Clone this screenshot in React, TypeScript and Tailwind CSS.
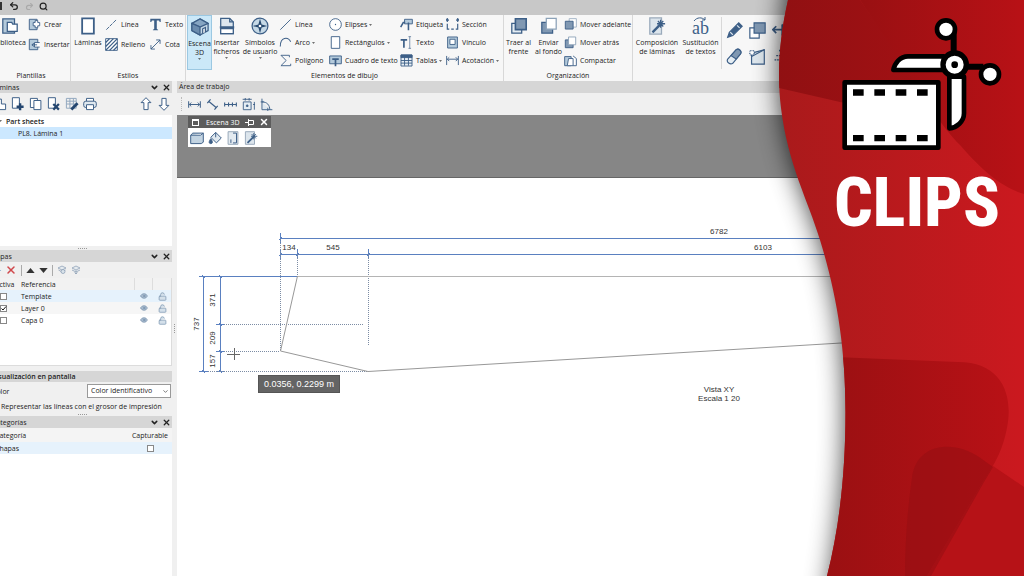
import React from "react";
import { ChevronDown, Eye, LockOpen, Redo2, Search, Undo2, X } from "lucide-react";

const INK = "#3d5f87";
const PALE = "#b4cadb";

const glyphs: Record<string, React.ReactNode> = {
  library: (
    <>
      <path d="M2 2h13v16H2z" fill={PALE} />
      <path d="M7 6h5l1 2h5v8H7z" fill="#fff" />
    </>
  ),
  create: (
    <>
      <path d="M2 2h12v16H2z" fill={PALE} />
      <path d="M11 4h4v3h3v5h-3v3h-4v-3H8V7h3z" fill="#fff" />
    </>
  ),
  insert: (
    <>
      <path d="M2 2h13v16H2z" fill={PALE} />
      <path d="M18 7h-8v7h8" fill="#fff" />
      <path d="M6 10.500h8M9 8l-3 2.500L9 13" />
    </>
  ),
  sheet: <path d="M3.500 1.500h13v17h-13z" fill="#fff" strokeWidth="2" />,
  line: <path d="M2 18L18 2" />,
  dashline: <path d="M2 18L18 2" strokeDasharray="6 1.500" />,
  hatch: (
    <>
      <path d="M1 1h18v18H1z" fill="#fff" />
      <path d="M1 7l6-6M1 13L13 1M1 19L19 1M7 19L19 7M13 19l6-6" strokeWidth="2" />
    </>
  ),
  letter: <path d="M2 1h16v5h-1.500L15.500 4H12v13l2 1v1H6v-1l2-1V4H4.500L3.500 6H2z" fill={INK} stroke="none" />,
  dim: <path d="M3 17L17 3M3 11v6h6M11 3h6v6" />,
  cube: (
    <>
      <path d="M10 1l9 5v8l-9 5-9-5V6z" fill="#c5d8e6" />
      <path d="M1 6l9 4 9-4-9-5z" fill="#86a5c2" />
      <path d="M1 6l9 4v9l-9-5z" fill="#6b8cae" />
      <path d="M13 17v-5l3-1.500v5" fill="#fff" />
    </>
  ),
  file: (
    <>
      <path d="M3 1.500h10l4 4v13H3z" fill="#dce6ee" />
      <path d="M13 1.500v4h4" />
      <path d="M2 11.500h16" strokeWidth="2.500" />
      <path d="M3 13h14v5.500H3z" fill="#fff" />
    </>
  ),
  compass: (
    <>
      <circle cx="10" cy="10" r="8.800" fill="#c6d9e6" />
      <path d="M10 2l1.800 6.200L18 10l-6.200 1.800L10 18l-1.800-6.200L2 10l6.200-1.800z" fill="#27496f" stroke="none" />
      <circle cx="10" cy="10" r="1.500" fill="#fff" stroke="none" />
    </>
  ),
  arc: <path d="M2 16C2 1 14 1 18 9" strokeWidth="1.600" />,
  polygon: <path d="M16 5V2H3l8 8-8 8h15v-3" />,
  ellipse: (
    <>
      <circle cx="10" cy="10" r="9" fill="#fff" />
      <circle cx="10" cy="10" r="1" fill={INK} stroke="none" />
    </>
  ),
  rect: <path d="M3.500 1h13v18h-13z" fill="#fff" />,
  textbox: (
    <>
      <path d="M1 3h18v12H1z" fill={PALE} />
      <path d="M5 8h10M10 8v11" strokeWidth="2.600" />
    </>
  ),
  tag: (
    <>
      <path d="M7 2h12v7H7z" fill={PALE} />
      <path d="M1 14l4-7h3M13 7v12" strokeWidth="2.400" />
    </>
  ),
  text: (
    <>
      <path d="M1 6h10M6 6v12" strokeWidth="2.600" />
      <path d="M15 1v18M13 1h4M13 19h4" strokeWidth="1" />
    </>
  ),
  table: (
    <>
      <path d="M1.500 1.500h17v17h-17z" fill="#e8eff5" />
      <path d="M1.500 1.500h17v4h-17z" fill={INK} />
      <path d="M1.500 10h17M1.500 14h17M7 2v16M13 2v16" />
    </>
  ),
  section: <path d="M2 3v3M2 9v8h3M18 3v3M18 9v8h-3M8 17h4M0 4l2-3 2 3M16 4l2-3 2 3" strokeWidth="1.800" />,
  link: (
    <>
      <path d="M2.500 1.500h15v17h-15z" fill={PALE} />
      <path d="M6 5h8v8H6z" fill="#fff" />
    </>
  ),
  measure: <path d="M1 3v14M19 3v14M2 8h16M5 5L2 8l3 3M15 5l3 3-3 3" />,
  hmeasure: <path d="M1 5v10M19 5v10M2 10h16M5 7l-3 3 3 3M15 7l3 3-3 3" strokeWidth="1.500" />,
  front: (
    <>
      <path d="M2 7h11v11H2z" fill="#e5edf3" />
      <path d="M6 2h12v12H6z" fill="#8098b2" strokeWidth="1.800" />
    </>
  ),
  back: (
    <>
      <path d="M2 6h12v12H2z" fill="#8098b2" />
      <path d="M7 1.500h11v12H7z" fill="#fff" stroke="#8ca2b8" />
    </>
  ),
  forward: (
    <>
      <path d="M8 1h11v13H8z" fill="#fff" stroke="#9fb1c3" />
      <path d="M2 5h12v12H2z" fill="#8098b2" />
    </>
  ),
  compact: (
    <>
      <path d="M1 4h10v14H1z" fill={PALE} />
      <path d="M7 7h7v11H5zM14 18h5V7l-5-4" fill="#fff" />
    </>
  ),
  wand: (
    <>
      <path d="M2 1h13v18H2z" fill="#dce5ec" stroke="#9aaabb" />
      <path d="M5 17l9-9" strokeWidth="2.600" />
      <path d="M14 3v9M10 7.500h9M11 4.500l6 6M17 4.500l-6 6" />
    </>
  ),
  pencil: (
    <>
      <path d="M2 18l2-6L15 1l4 4L8 16z" fill={INK} />
      <path d="M5 12l3 3M13 4l3 3" stroke="#dbe6ef" />
    </>
  ),
  eraser: (
    <>
      <path d="M2 13L12 2c3-2 7 2 5 5L8 18c-3 2-8-1-6-5z" fill="#e5edf3" />
      <path d="M6 9l6-7c3-2 7 2 5 5l-5 6z" fill="#8098b2" />
    </>
  ),
  copies: (
    <>
      <path d="M1 7h11v12H1z" fill="#fff" />
      <path d="M6 1h13v12H6z" fill="#8098b2" />
    </>
  ),
  region: (
    <>
      <path d="M3 6l15-4v17H3z" fill="#dfe8ef" />
      <path d="M3 10L18 2" />
      <path d="M1 3h5v5H1z" fill="#fff" strokeDasharray="1 1" />
    </>
  ),
  arrows: <path d="M1 9h13M5 5L1 9l4 4M12 3v13M12 3l4 3M12 16l5-3" strokeWidth="2" />,
  dotted: <path d="M3 14h15M9 2v3M5 9h9M9 17v3" strokeDasharray="2 1" />,
  pages: (
    <>
      <path d="M2 2h10v13H2z" fill="#fff" />
      <path d="M7 5h10v13H7z" fill="#fff" />
    </>
  ),
  hand: <path d="M2 18V9h6V3h4v7h6v8z" fill="#fff" />,
  addpage: (
    <>
      <path d="M2 1h10v15H2z" fill="#fff" />
      <path d="M13 9v10M8 14h10" strokeWidth="3.400" stroke="#24466f" />
    </>
  ),
  delpage: (
    <>
      <path d="M2 1h10v15H2z" fill="#fff" />
      <path d="M9 10l8 8M17 10l-8 8" strokeWidth="3.200" stroke="#24466f" />
    </>
  ),
  editgrid: (
    <>
      <path d="M2 2h14v14H2zM2 6h14M2 10h14M7 2v14M12 2v14" stroke="#91a8be" />
      <path d="M9 18l9-9" strokeWidth="4" stroke="#24466f" />
    </>
  ),
  print: (
    <>
      <path d="M5 6V2h10v4" fill="#fff" />
      <rect x="1" y="6" width="18" height="9" rx="3" fill="#dfe8ef" />
      <path d="M5 11h10v7H5z" fill="#fff" />
    </>
  ),
  up: <path d="M10 1l7 7h-4v10H7V8H3z" fill="#fff" />,
  down: <path d="M10 19l7-7h-4V2H7v10H3z" fill="#fff" />,
  diag: <path d="M4 5l12 10M2 8l5-6M13 18l5-6" strokeWidth="1.800" />,
  chain: <path d="M1 7v6M7 7v6M13 7v6M19 7v6M1 10h18" strokeWidth="1.700" />,
  frame: (
    <>
      <path d="M2 6h12v12H2z" fill="#e5edf3" />
      <path d="M1 2h14M5 0v4M11 0v4M19 6v12M17 10h3" />
      <path d="M8 10v4M6 12h4" strokeWidth="2" />
    </>
  ),
  angle: (
    <>
      <path d="M3 1v17h16M3 6c8 0 12 5 12 12" fill="#dfe8ef" />
      <path d="M1 6h5M12 15v5" />
    </>
  ),
  folder: <path d="M1 6l3-3h15v13l-3 2H1zM1 6h14l4-3" fill="#c3d4e2" />,
  bucket: (
    <>
      <path d="M11 2l8 8-7 7-8-8z" fill="#dfe8ef" />
      <path d="M11 2v7" />
      <path d="M4 11c-3 4-3 7 0 7s3-3 0-7z" fill={INK} />
    </>
  ),
  door: (
    <>
      <path d="M3 1h14v18H3z" fill="#e3eaf0" stroke="#98a8b8" />
      <path d="M10 3h5v14h-5M7 12v5" />
    </>
  ),
  layers: (
    <>
      <path d="M2 6l8-4 8 4-8 4z" fill="#dfe8ef" />
      <path d="M3 10l7 4 7-4" />
      <circle cx="12" cy="13" r="4" fill="#cbdbe8" />
    </>
  ),
  layersdown: (
    <>
      <path d="M2 6l8-4 8 4-8 4zM2 10l8 4 8-4" fill="#dfe8ef" />
      <path d="M10 11v7M7 15l3 3 3-3" />
    </>
  ),
};

function Glyph({ name, className = "size-[13px]" }: { name: string; className?: string }) {
  return (
    <svg viewBox="0 0 20 20" className={`shrink-0 ${className}`} fill="none" stroke={INK} strokeWidth="1.400" aria-hidden="true">
      {glyphs[name]}
    </svg>
  );
}

function Caret() {
  return (
    <svg viewBox="0 0 4 2" className="h-[2px] w-[3px] shrink-0" aria-hidden="true">
      <path d="M0 0h4L2 2z" fill="#444" />
    </svg>
  );
}

function Tool({ icon, label, menu }: { icon: string; label: string; menu?: boolean }) {
  return (
    <button type="button" className="flex items-center gap-[2px] whitespace-nowrap">
      <Glyph name={icon} className="mr-px size-[13px]" />
      {label}
      {menu && <Caret />}
    </button>
  );
}

function BigTool({ icon, lines, menu, className = "" }: { icon: string; lines: string[]; menu?: boolean; className?: string }) {
  return (
    <button type="button" className={`flex h-[55px] shrink-0 flex-col items-center pt-[2px] leading-[9px] ${className}`}>
      <Glyph name={icon} className="mb-[3px] size-[18px]" />
      {lines.map((line) => (
        <span key={line} className="whitespace-nowrap">{line}</span>
      ))}
      {menu && <span className="mt-px"><Caret /></span>}
    </button>
  );
}

function Stack({ children, className = "" }: { children: React.ReactNode; className?: string }) {
  return <div className={`flex shrink-0 flex-col items-start ${className}`}>{children}</div>;
}

function Group({ label, children, className = "" }: { label: string; children: React.ReactNode; className?: string }) {
  return (
    <section className={`flex shrink-0 flex-col justify-between border-r border-[#d8d8d8] ${className}`}>
      <div className="flex">{children}</div>
      <div className="text-center leading-[10px]">{label}</div>
    </section>
  );
}

const two = "gap-[7px] pt-[3px]";
const three = "gap-[5px] pt-[3px]";

function Ribbon() {
  return (
    <div className="-ml-2 flex h-[66px] bg-[#f7f7f7]">
      <Group label="Plantillas" className="w-[79px]">
        <BigTool icon="library" lines={["Biblioteca"]} className="w-[36px]" />
        <Stack className={two}>
          <Tool icon="create" label="Crear" />
          <Tool icon="insert" label="Insertar" />
        </Stack>
      </Group>
      <Group label="Estilos" className="w-[115px]">
        <BigTool icon="sheet" lines={["Láminas"]} className="w-[34px]" />
        <Stack className={`w-[44px] ${two}`}>
          <Tool icon="dashline" label="Línea" />
          <Tool icon="hatch" label="Relleno" />
        </Stack>
        <Stack className={two}>
          <Tool icon="letter" label="Texto" />
          <Tool icon="dim" label="Cota" />
        </Stack>
      </Group>
      <Group label="Elementos de dibujo" className="w-[318px]">
        <BigTool icon="cube" lines={["Escena", "3D"]} menu className="ml-px w-[25px] border border-[#9bc8e2] bg-[#cbe8f8]" />
        <BigTool icon="file" lines={["Insertar", "ficheros"]} menu className="w-[29px]" />
        <BigTool icon="compass" lines={["Símbolos", "de usuario"]} menu className="w-[38px]" />
        <Stack className={`w-[50px] ${three}`}>
          <Tool icon="line" label="Línea" />
          <Tool icon="arc" label="Arco" menu />
          <Tool icon="polygon" label="Polígono" />
        </Stack>
        <Stack className={`w-[71px] ${three}`}>
          <Tool icon="ellipse" label="Elipses" menu />
          <Tool icon="rect" label="Rectángulos" menu />
          <Tool icon="textbox" label="Cuadro de texto" />
        </Stack>
        <Stack className={`w-[46px] ${three}`}>
          <Tool icon="tag" label="Etiqueta" />
          <Tool icon="text" label="Texto" />
          <Tool icon="table" label="Tablas" menu />
        </Stack>
        <Stack className={three}>
          <Tool icon="section" label="Sección" />
          <Tool icon="link" label="Vínculo" />
          <Tool icon="measure" label="Acotación" menu />
        </Stack>
      </Group>
      <Group label="Organización" className="w-[129px]">
        <BigTool icon="front" lines={["Traer al", "frente"]} className="w-[29px]" />
        <BigTool icon="back" lines={["Enviar", "al fondo"]} className="w-[31px]" />
        <Stack className={three}>
          <Tool icon="forward" label="Mover adelante" />
          <Tool icon="back" label="Mover atrás" />
          <Tool icon="compact" label="Compactar" />
        </Stack>
      </Group>
      <BigTool icon="wand" lines={["Composición", "de láminas"]} className="w-[48px]" />
      <button type="button" className="flex h-[55px] w-[39px] shrink-0 flex-col items-center pt-[2px] leading-[9px]">
        <span className="relative mb-[3px] h-[18px] font-['Liberation_Serif',serif] text-[18px] leading-[22px] text-[#3d5f87]">
          ab
          <svg viewBox="0 0 14 5" className="absolute top-0 left-px h-[5px] w-[14px]" fill="none" stroke={INK} aria-hidden="true">
            <path d="M1 4C4 0 9 0 12 3M12 0v3H9" />
          </svg>
        </span>
        <span className="whitespace-nowrap">Sustitución</span>
        <span className="whitespace-nowrap">de textos</span>
      </button>
      <div className="mt-[2px] ml-px grid h-[52px] shrink-0 grid-cols-3 content-around gap-x-[6px] border-l border-[#d8d8d8] pl-[4px]">
        {["pencil", "copies", "arrows", "eraser", "region", "dotted"].map((icon) => (
          <button key={icon} type="button" aria-label={icon}>
            <Glyph name={icon} className="size-[17px]" />
          </button>
        ))}
      </div>
    </div>
  );
}

function PanelHeader({ title }: { title: string }) {
  return (
    <div className="flex h-[12px] shrink-0 items-center bg-[#d6d6d6] pr-px">
      <h2 className="flex-1">{title}</h2>
      <button type="button" aria-label="Contraer" className="mr-[3px]"><ChevronDown size={9} strokeWidth={4} /></button>
      <button type="button" aria-label="Cerrar"><X size={9} strokeWidth={3.5} /></button>
    </div>
  );
}

function Splitter() {
  return (
    <div className="flex h-[4px] shrink-0 items-center justify-center">
      <div className="w-[9px] border-t border-dotted border-[#999]" />
    </div>
  );
}

function Tick({ label, checked }: { label: string; checked?: boolean }) {
  return (
    <span className="relative block size-[7px] shrink-0">
      <input type="checkbox" aria-label={label} defaultChecked={checked} className="block size-[7px] appearance-none border border-[#888] bg-white" />
      {checked && (
        <svg viewBox="0 0 7 7" className="pointer-events-none absolute inset-0 size-[7px]" fill="none" stroke="#111" aria-hidden="true">
          <path d="M1.500 3.500L3 5l3-3.500" />
        </svg>
      )}
    </span>
  );
}

const layers = [
  { name: "Template", on: false, tone: "bg-[#e6f2fc]" },
  { name: "Layer 0", on: true, tone: "bg-[#f6f6f6]" },
  { name: "Capa 0", on: false, tone: "bg-white" },
];

function Sidebar() {
  return (
    <aside className="-ml-2 flex w-[180px] shrink-0 flex-col bg-[#f0f0f0]">
      <PanelHeader title="Láminas" />
      <div className="flex h-[22px] shrink-0 items-center gap-[4px] pr-px">
        {["hand", "addpage", "pages", "delpage", "editgrid", "print"].map((icon) => (
          <button key={icon} type="button" aria-label={icon} className="translate-x-px"><Glyph name={icon} className="size-[14px]" /></button>
        ))}
        <span className="flex-1" />
        {["up", "down"].map((icon) => (
          <button key={icon} type="button" aria-label={icon}><Glyph name={icon} className="size-[14px]" /></button>
        ))}
      </div>
      <div className="h-[131px] shrink-0 bg-white">
        <div className="flex h-[12px] items-center gap-[4px] pl-[7px] font-semibold">
          <Caret />
          <span>Part sheets</span>
        </div>
        <div className="flex h-[12px] items-center bg-[#cce8ff] pl-[26px]">PL8. Lámina 1</div>
      </div>
      <Splitter />
      <PanelHeader title="Capas" />
      <div className="flex h-[16px] shrink-0 items-center gap-[4px]">
        <button type="button" aria-label="Añadir" className="w-[9px] text-right text-[#335566]">+</button>
        <button type="button" aria-label="Eliminar"><X size={12} strokeWidth={3} color="#d0484c" /></button>
        <span className="h-[11px] border-l border-[#aaa]" />
        <button type="button" aria-label="Subir">
          <svg viewBox="0 0 10 6" className="h-[5px] w-[9px]"><path d="M5 0l5 6H0z" fill="#333" /></svg>
        </button>
        <button type="button" aria-label="Bajar">
          <svg viewBox="0 0 10 6" className="h-[5px] w-[9px]"><path d="M0 0h10L5 6z" fill="#333" /></svg>
        </button>
        <span className="h-[11px] border-l border-[#aaa]" />
        <button type="button" aria-label="Capas visibles" className="opacity-60"><Glyph name="layers" className="size-[10px]" /></button>
        <button type="button" aria-label="Bajar capas" className="opacity-60"><Glyph name="layersdown" className="size-[10px]" /></button>
      </div>
      <div className="h-[88px] shrink-0 border-r border-b border-[#dcdcdc] bg-white">
        <table className="w-full table-fixed border-collapse text-left">
          <thead>
            <tr className="h-[12px] bg-[#f2f2f2]">
              <th className="w-[29px] p-0 pl-[3px] font-normal">Activa</th>
              <th className="p-0 font-normal">Referencia</th>
              <th className="w-[18px] border-l border-[#ddd] p-0" aria-label="Visible" />
              <th className="w-[19px] border-l border-[#ddd] p-0" aria-label="Bloqueo" />
            </tr>
          </thead>
          <tbody>
            {layers.map((layer) => (
              <tr key={layer.name} className={`h-[12px] ${layer.tone}`}>
                <td className="p-0 pl-[8px]"><Tick label={layer.name} checked={layer.on} /></td>
                <td className="p-0">{layer.name}</td>
                <td className="p-0 pl-[6px]"><Eye size={8} color="#6b87a5" fill="#b3c5d6" /></td>
                <td className="p-0 pl-[6px]"><LockOpen size={9} color="#7d97b1" fill="#d4e0ea" /></td>
              </tr>
            ))}
          </tbody>
        </table>
      </div>
      <h3 className="mt-[5px] h-[11px] shrink-0 bg-[#d6d6d6] leading-[11px] font-semibold">Visualización en pantalla</h3>
      <div className="flex h-[18px] shrink-0 items-center justify-between pr-px">
        <label htmlFor="color-mode">Color</label>
        <div className="relative w-[84px]">
          <select id="color-mode" className="block h-[14px] w-full appearance-none border border-[#999] bg-white pl-[3px] leading-[12px]">
            <option>Color identificativo</option>
          </select>
          <ChevronDown size={7} className="pointer-events-none absolute top-[4px] right-[2px]" />
        </div>
      </div>
      <label className="flex h-[12px] shrink-0 items-center gap-[3px] whitespace-nowrap">
        <input type="checkbox" className="block size-[6px] appearance-none border border-[#777] bg-white" />
        Representar las líneas con el grosor de impresión
      </label>
      <Splitter />
      <PanelHeader title="Categorías" />
      <div className="min-h-[100px] flex-1 bg-white">
        <table className="w-full table-fixed border-collapse text-left">
          <thead>
            <tr className="h-[14px] bg-[#f4f4f4]">
              <th className="p-0 pl-[3px] font-normal">Categoría</th>
              <th className="w-[44px] p-0 text-center font-normal">Capturable</th>
            </tr>
          </thead>
          <tbody>
            <tr className="h-[12px] bg-[#e6f2fc]">
              <td className="p-0 pl-[3px]">Chapas</td>
              <td className="p-0 pl-[19px]"><Tick label="Capturable" /></td>
            </tr>
          </tbody>
        </table>
      </div>
    </aside>
  );
}

const topTicks = [[280, 238], [280, 254], [297, 254], [368, 254]];
const sideTicks = [[203, 276], [220, 276], [220, 324], [220, 351], [203, 371], [220, 371]];

function Drawing() {
  return (
    <svg viewBox="177 178 847 398" preserveAspectRatio="xMinYMin meet" className="block h-[398px] w-full" fill="none">
      <g stroke="#5a80c0">
        <path d="M280 238.500H1024M280 254.500H1024M203 276.500H297M203.500 276V371M220.500 276V371" />
        {topTicks.map(([x, y]) => (
          <path key={`${x}-${y}`} d={`M${x + 0.5} ${y - 5}v10M${x - 1} ${y + 2}l3-3`} />
        ))}
        {sideTicks.map(([x, y]) => (
          <path key={`${x}-${y}`} d={`M${x - 4} ${y + 0.5}h9M${x - 1} ${y - 1}l3 3`} />
        ))}
      </g>
      <path
        d="M280.500 239V351M297.500 254V276M368.500 254V346M224 324.500H363M224 351.500H280M208 371.500H368"
        stroke="#7c8ca4"
        strokeDasharray="1 1"
      />
      <path d="M297 276.500H1024" stroke="#b4b4b4" />
      <path d="M297.500 276L280.500 351L368 371.500L1024 332" stroke="#989898" />
      <path d="M227 354.500h13M234.500 348v12" stroke="#666" />
      <g fill="#333" fontSize="8" textAnchor="middle" className="font-['Liberation_Sans',sans-serif]">
        <text x="719" y="234">6782</text>
        <text x="763" y="250">6103</text>
        <text x="289" y="250">134</text>
        <text x="333" y="250">545</text>
        <text transform="translate(199 324) rotate(-90)">737</text>
        <text transform="translate(215 300) rotate(-90)">371</text>
        <text transform="translate(215 338) rotate(-90)">209</text>
        <text transform="translate(215 361) rotate(-90)">157</text>
        <text x="719" y="392">Vista XY</text>
        <text x="719" y="401">Escala 1 20</text>
      </g>
    </svg>
  );
}

function Workspace() {
  return (
    <main className="flex min-w-0 flex-1 flex-col bg-white">
      <h1 className="h-[12px] shrink-0 bg-[#d6d6d6] pl-[2px] leading-[12px]">Área de trabajo</h1>
      <div className="flex h-[22px] shrink-0 items-center gap-[5px] bg-[#f0f0f0] pl-[4px]">
        <span className="mr-px h-[14px] border-l border-dotted border-[#bbb]" />
        {["hmeasure", "diag", "chain", "frame", "angle"].map((icon) => (
          <button key={icon} type="button" aria-label={icon}><Glyph name={icon} /></button>
        ))}
      </div>
      <div className="relative flex-1">
        <div className="h-[63px] border-b border-[#666] bg-[#868686]" />
        <Drawing />
        <div className="absolute top-[1px] left-[11px] w-[83px] bg-white">
          <div className="flex h-[12px] items-center bg-[#5c5c5c] pl-[4px] text-white">
            <span className="size-[7px] border border-t-2 border-white" />
            <span className="ml-[7px] flex-1">Escena 3D</span>
            <button type="button" aria-label="Fijar">
              <svg viewBox="0 0 9 7" className="h-[7px] w-[9px]" fill="none" stroke="#fff"><path d="M0 3.500h3M3.500 0v7M4 1.500h4.500v4H4" /></svg>
            </button>
            <button type="button" aria-label="Cerrar" className="mr-[2px] ml-[5px]"><X size={10} strokeWidth={3.5} /></button>
          </div>
          <div className="flex h-[19px] items-center gap-[4px] pl-[2px]">
            {["folder", "bucket", "door", "wand"].map((icon) => (
              <button key={icon} type="button" aria-label={icon}><Glyph name={icon} className="size-[14px]" /></button>
            ))}
          </div>
        </div>
        <div className="absolute top-[260px] left-[81px] border border-[#555] bg-[#646464] px-[5px] font-['Liberation_Sans',sans-serif] text-[9px] leading-[16px] whitespace-nowrap text-white">
          0.0356, 0.2299 m
        </div>
      </div>
    </main>
  );
}

function ClipsBanner() {
  return (
    <div className="absolute inset-y-0 right-0 flex w-[254px] flex-col items-start pt-[17px]">
      <svg viewBox="770 0 254 576" preserveAspectRatio="none" className="absolute inset-0 size-full overflow-visible" aria-hidden="true">
        <defs>
          <linearGradient id="base" x1="0" x2="1">
            <stop offset="0" stopColor="#a81a1b" />
            <stop offset="1" stopColor="#cb191f" />
          </linearGradient>
          <linearGradient id="deep" x1="0" x2="1">
            <stop offset="0" stopColor="#8f1012" />
            <stop offset="1" stopColor="#a51114" />
          </linearGradient>
          <linearGradient id="side" x1="0" x2="1">
            <stop offset="0" stopColor="#991012" />
            <stop offset="1" stopColor="#b81116" />
          </linearGradient>
          <clipPath id="wave">
            <path d="M788 0C779 40 777 75 781 108C788 165 808 200 820 240C836 292 845.500 345 845.500 412C845.500 470 840 525 827 576H1024V0Z" />
          </clipPath>
          <filter id="shade" x="-40%" y="-10%" width="160%" height="120%">
            <feGaussianBlur stdDeviation="13" />
          </filter>
        </defs>
        <path
          d="M788 -30C779 40 777 75 781 108C788 165 808 200 820 240C836 292 845.500 345 845.500 412C845.500 470 840 525 827 606H1024V-30Z"
          fill="#000"
          opacity="0.750"
          filter="url(#shade)"
        />
        <g clipPath="url(#wave)">
          <path d="M770 0h254v576H770z" fill="url(#base)" />
          <path d="M770 86L840 102L945 120L860 0H770Z" fill="url(#deep)" />
          <path d="M860 0L905 67C930 108 944 129 960 145C985 174 1004 188 1024 194V0Z" fill="url(#side)" />
          <path d="M835 357L958 362C1000 362 1012 392 1008 422C1004 448 996 462 984 480L927 576H820Z" fill="url(#side)" />
          <path d="M993 466L1024 487V576H927L984 480Z" fill="#b61217" />
          <path d="M905 576C905 540 908 505 912 478C916 442 955 440 979 457L993 467L984 482L931 576Z" fill="#920e11" opacity="0.500" />
        </g>
      </svg>
      <svg viewBox="216 51 480 402" className="relative ml-[72px] h-[134px] w-[160px] shrink-0" fill="#fff" stroke="#000" strokeWidth="14" strokeLinejoin="round" aria-hidden="true">
        <rect x="224" y="247" width="281" height="196" />
        <path d="M249 277.500h32M313 277.500h32M377 277.500h32M441 277.500h32M249 414.500h32M313 414.500h32M377 414.500h32M441 414.500h32" strokeWidth="19" />
        <path d="M522 169H414C390 169 374 190 370 210H522Z" />
        <path d="M538 230V385C560 383 582 365 582 340V230Z" />
        <path d="M551 95V160M590 200H640" strokeWidth="18" />
        <circle cx="528" cy="88" r="27" />
        <circle cx="660" cy="223" r="27" />
        <circle cx="554" cy="194" r="35" strokeWidth="16" />
        <circle cx="554" cy="194" r="10" fill="#000" stroke="none" />
      </svg>
      <h2 className="relative mt-[17px] ml-[64px] font-['Roboto_Condensed','Liberation_Sans_Narrow',Roboto,sans-serif] text-[68px] leading-[70px] font-extrabold text-white">
        CLIPS
      </h2>
    </div>
  );
}

export default function App() {
  return (
    <div className="relative flex min-h-screen flex-col overflow-hidden bg-[#d0d0d0] font-['Open_Sans','Noto_Sans',sans-serif] text-[7px] leading-[11px] text-[#222]">
      <header className="flex h-[15px] shrink-0 items-center bg-[#c8c8c8] pb-[3px]">
        <span className="mr-[7px] h-[8px] w-[2px] bg-[#333]" />
        <button type="button" aria-label="Deshacer" className="mr-[6px]"><Undo2 size={10} strokeWidth={3} /></button>
        <button type="button" aria-label="Rehacer" className="mr-[5px] text-[#aaa]"><Redo2 size={9} strokeWidth={3} /></button>
        <button type="button" aria-label="Buscar"><Search size={9} strokeWidth={3} /></button>
      </header>
      <Ribbon />
      <div className="flex flex-1">
        <Sidebar />
        <div className="flex w-[5px] shrink-0 items-center justify-center bg-[#f0f0f0]">
          <span className="h-[9px] border-l border-dotted border-[#999]" />
        </div>
        <Workspace />
      </div>
      <ClipsBanner />
    </div>
  );
}
